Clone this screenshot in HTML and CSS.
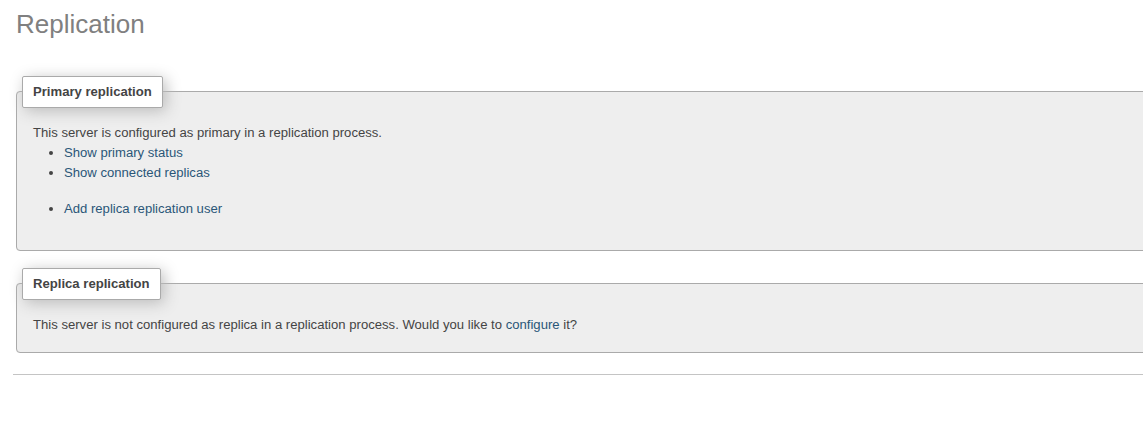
FILE: index.html
```
<!DOCTYPE html>
<html lang="en">
<head>
<meta charset="utf-8">
<title>Replication</title>
<link rel="stylesheet" href="styles.css">
</head>
<body>
<div class="page">
  <h2 class="title">Replication</h2>

  <fieldset class="panel panel-primary">
    <legend class="panel-legend">Primary replication</legend>
    <div class="panel-body">
      <p class="text">This server is configured as primary in a replication process.</p>
      <ul class="links">
        <li><a class="link" href="#">Show primary status</a></li>
        <li><a class="link" href="#">Show connected replicas</a></li>
      </ul>
      <ul class="links links-last">
        <li><a class="link" href="#">Add replica replication user</a></li>
      </ul>
    </div>
  </fieldset>

  <fieldset class="panel panel-replica">
    <legend class="panel-legend">Replica replication</legend>
    <div class="panel-body">
      <p class="text text-last">This server is not configured as replica in a replication process. Would you like to <a class="link" href="#">configure</a> it?</p>
    </div>
  </fieldset>

  <hr class="rule">
</div>
</body>
</html>
```

FILE: styles.css
```
html, body {
  margin: 0;
  padding: 0;
  overflow: hidden;
  background: #fff;
}

.page {
  width: 1143px;
  overflow: hidden;
  padding-left: 13px;
  box-sizing: border-box;
  font-family: "Liberation Sans", Arial, sans-serif;
  font-size: 13.12px;
  line-height: 20px;
  color: #444;
}

.title {
  margin: 10px 0 0 3px;
  font-size: 26px;
  line-height: 29px;
  font-weight: normal;
  color: #808080;
}

.panel {
  width: 1200px;
  box-sizing: border-box;
  margin: 0 0 0 3px;
  padding: 15.5px 5px 15px;
  border: 1px solid #aaa;
  border-radius: 4px;
  background: #eee;
  min-width: 0;
}

.panel-primary {
  margin-top: 37px;
}

.panel-replica {
  margin-top: 17px;
  padding-bottom: 17px;
}

.panel-legend {
  padding: 5px 10px;
  line-height: 19.5px;
  font-weight: bold;
  color: #444;
  background: #fff;
  border: 1px solid #aaa;
  border-radius: 2px;
  box-shadow: 3px 3px 15px #bbb;
}

.panel-body {
  padding: 0 10px 0 11px;
}

.text {
  margin: 0;
}

.links {
  margin: 0 0 16px;
  padding-left: 31px;
}

.link {
  color: #2a5678;
  text-decoration: none;
}

.rule {
  width: 1200px;
  margin: 21px 0 0;
  border: 0;
  border-top: 1px solid #c4c4c4;
  height: 0;
}
```
